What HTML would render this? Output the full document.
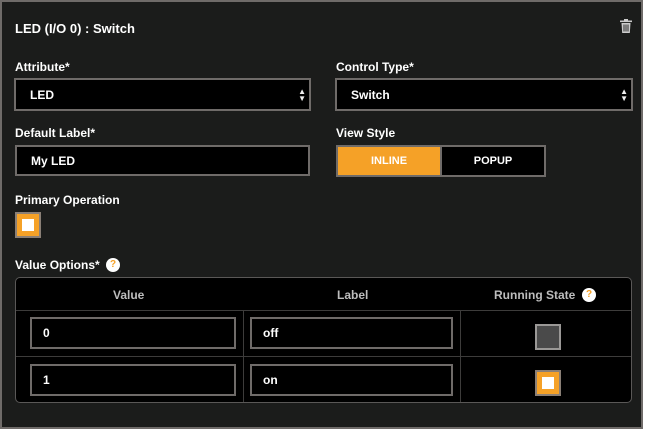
<!DOCTYPE html>
<html><head><style>
*{box-sizing:border-box;margin:0;padding:0}
body{width:647px;height:431px;background:#fff;font-family:"Liberation Sans",sans-serif;font-weight:bold;color:#fff;position:relative;overflow:hidden}
.panel{position:absolute;left:0;top:0;width:643px;height:429px;background:#1b1c1b;border:2px solid #6f6b69}
.a{position:absolute}
.lbl{font-size:12px;color:#fff}
.box{position:absolute;background:#000;border:2px solid #6f6b69;font-size:12px;padding-left:14px;display:flex;align-items:center}
.arr{position:absolute;right:3px;top:8px;font-size:8px;line-height:7px;color:#eee}
.chk{position:absolute;width:26px;height:26px;background:#f5a127;border:2px solid #8a7f76}
.chk:after{content:"";position:absolute;left:5px;top:5px;width:12px;height:12px;background:#fff}
.help{position:absolute;width:14px;height:14px;border-radius:50%;background:#fff;color:#f5a127;font-size:10px;text-align:center;line-height:14px}
.th{position:absolute;font-size:12px;color:#bdbdbd;top:288px}
</style></head><body>
<div class="panel"></div>
<div class="a" style="left:15px;top:21px;font-size:13px">LED (I/O 0) : Switch</div>
<svg class="a" style="left:620px;top:19px" width="12" height="14" viewBox="0 0 12 14"><rect x="0" y="1.5" width="12" height="1.6" fill="#ccc"/><rect x="4" y="0" width="4" height="2" fill="#ccc"/><path d="M1.5 4h9l-.7 10H2.2z" fill="#ccc"/><path d="M4 5.5v7M6 5.5v7M8 5.5v7" stroke="#1b1c1b" stroke-width="0.9"/></svg>
<div class="a lbl" style="left:15px;top:60px">Attribute*</div>
<div class="box" style="left:14px;top:78px;width:297px;height:33px">LED<div class="arr">▲<br>▼</div></div>
<div class="a lbl" style="left:336px;top:60px">Control Type*</div>
<div class="box" style="left:335px;top:78px;width:298px;height:33px">Switch<div class="arr">▲<br>▼</div></div>
<div class="a lbl" style="left:15px;top:126px">Default Label*</div>
<div class="box" style="left:15px;top:145px;width:295px;height:31px">My LED</div>
<div class="a lbl" style="left:336px;top:126px">View Style</div>
<div class="a" style="left:336px;top:145px;width:210px;height:32px;border:2px solid #6f6b69;background:#000;display:flex;font-size:11px">
<div style="width:104px;background:#f5a127;display:flex;align-items:center;justify-content:center;border-right:2px solid #6f6b69">INLINE</div>
<div style="flex:1;display:flex;align-items:center;justify-content:center">POPUP</div></div>
<div class="a lbl" style="left:15px;top:193px">Primary Operation</div>
<div class="chk" style="left:15px;top:212px"></div>
<div class="a lbl" style="left:15px;top:258px">Value Options*</div>
<div class="help" style="left:106px;top:258px">?</div>
<div class="a" style="left:15px;top:277px;width:617px;height:126px;background:#000;border:1px solid #5a5857;border-radius:5px"></div>
<div class="a" style="left:16px;top:310px;width:615px;height:1px;background:#3d3c3b"></div>
<div class="a" style="left:16px;top:356px;width:615px;height:1px;background:#3d3c3b"></div>
<div class="a" style="left:243px;top:311px;width:1px;height:91px;background:#3d3c3b"></div>
<div class="a" style="left:460px;top:311px;width:1px;height:91px;background:#3d3c3b"></div>
<div class="th" style="left:113px">Value</div>
<div class="th" style="left:337px">Label</div>
<div class="th" style="left:494px">Running State</div>
<div class="help" style="left:582px;top:288px">?</div>
<div class="box" style="left:30px;top:317px;width:206px;height:32px;padding-left:11px">0</div>
<div class="box" style="left:250px;top:317px;width:203px;height:32px;padding-left:11px">off</div>
<div class="box" style="left:30px;top:364px;width:206px;height:32px;padding-left:11px">1</div>
<div class="box" style="left:250px;top:364px;width:203px;height:32px;padding-left:11px">on</div>
<div class="a" style="left:535px;top:324px;width:26px;height:26px;background:#4a4a4a;border:2px solid #9a9896"></div>
<div class="chk" style="left:535px;top:370px"></div>
</body></html>
